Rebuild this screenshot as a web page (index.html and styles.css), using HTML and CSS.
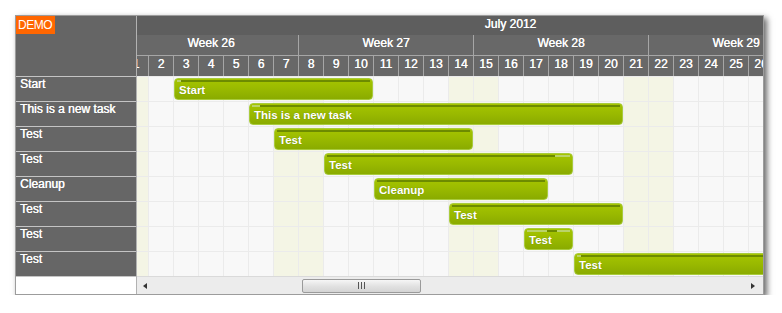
FILE: index.html
```html
<!DOCTYPE html>
<html>
<head>
<meta charset="utf-8">
<link rel="stylesheet" href="styles.css">
</head>
<body>
<div class="gantt">
  <div class="side">
    <div class="corner"><span class="demo">DEMO</span></div>
    <div class="label">Start</div>
    <div class="label">This is a new task</div>
    <div class="label">Test</div>
    <div class="label">Test</div>
    <div class="label">Cleanup</div>
    <div class="label">Test</div>
    <div class="label">Test</div>
    <div class="label">Test</div>
    <div class="side-foot"></div>
  </div>
  <div class="timeline">
    <div class="viewport">
      <div class="canvas">
        <div class="hrow month"><div class="mcell">July 2012</div></div>
        <div class="hrow weeks">
          <div class="wcell">Week 26</div>
          <div class="wcell">Week 27</div>
          <div class="wcell">Week 28</div>
          <div class="wcell">Week 29</div>
          <div class="wcell short"></div>
        </div>
        <div class="hrow days">
          <div class="dcell">1</div><div class="dcell">2</div><div class="dcell">3</div><div class="dcell">4</div><div class="dcell">5</div><div class="dcell">6</div><div class="dcell">7</div><div class="dcell">8</div><div class="dcell">9</div><div class="dcell">10</div><div class="dcell">11</div><div class="dcell">12</div><div class="dcell">13</div><div class="dcell">14</div><div class="dcell">15</div><div class="dcell">16</div><div class="dcell">17</div><div class="dcell">18</div><div class="dcell">19</div><div class="dcell">20</div><div class="dcell">21</div><div class="dcell">22</div><div class="dcell">23</div><div class="dcell">24</div><div class="dcell">25</div><div class="dcell">26</div><div class="dcell"></div><div class="dcell"></div><div class="dcell"></div><div class="dcell"></div><div class="dcell"></div>
        </div>
        <div class="rows">
          <div class="row"><div class="bar c3-11"><div class="strip"><i style="margin-left:4px;width:189px"></i></div><div class="txt">Start</div></div></div>
          <div class="row"><div class="bar c6-21"><div class="strip"><i style="margin-left:8px;width:360px"></i></div><div class="txt">This is a new task</div></div></div>
          <div class="row"><div class="bar c7-15"><div class="strip"><i style="margin-left:0;width:193px"></i></div><div class="txt">Test</div></div></div>
          <div class="row"><div class="bar c9-19"><div class="strip"><i style="margin-left:0;width:228px"></i></div><div class="txt">Test</div></div></div>
          <div class="row"><div class="bar c11-18"><div class="strip"><i style="margin-left:0;width:168px"></i></div><div class="txt">Cleanup</div></div></div>
          <div class="row"><div class="bar c14-21"><div class="strip"><i style="margin-left:0;width:168px"></i></div><div class="txt">Test</div></div></div>
          <div class="row"><div class="bar c17-19"><div class="strip"><i style="margin-left:20px;width:10px"></i></div><div class="txt">Test</div></div></div>
          <div class="row"><div class="bar c19-32"><div class="strip"><i style="margin-left:4px;width:318px"></i></div><div class="txt">Test</div></div></div>
        </div>
      </div>
    </div>
    <div class="scroll">
      <div class="arrow left"></div>
      <div class="track">
        <div class="thumb">
          <svg width="9" height="7" viewBox="0 0 9 7"><rect x="1" y="0" width="1" height="7" fill="#555"/><rect x="4" y="0" width="1" height="7" fill="#555"/><rect x="7" y="0" width="1" height="7" fill="#555"/></svg>
        </div>
      </div>
      <div class="arrow right"></div>
    </div>
  </div>
</div>
</body>
</html>
```

FILE: styles.css
```css
* { box-sizing: border-box; }

body {
  margin: 0;
  background: #ffffff;
  font-family: "Liberation Sans", Arial, sans-serif;
  font-size: 12px;
  color: #ffffff;
}

.gantt {
  margin: 15px 0 0 15px;
  width: 749px;
  border: 1px solid #9c9c9c;
  display: flex;
  box-shadow: 3px 3px 6px rgba(0, 0, 0, 0.6);
  background: #fff;
}

/* left column */
.side {
  width: 121px;
  flex: 0 0 121px;
  border-right: 1px solid #b2b2b2;
  display: flex;
  flex-direction: column;
}

.corner {
  height: 60px;
  background: #656565;
  display: flex;
  align-items: flex-start;
}

.demo {
  background: #ff6600;
  color: #fff;
  line-height: 18px;
  padding: 0 3px 0 2px;
  letter-spacing: -0.5px;
}

.label {
  height: 25px;
  border-top: 1px solid #c4c4c4;
  background: #666666;
  line-height: 15px;
  padding-left: 4px;
  white-space: nowrap;
  text-shadow: 0.3px 0 0 #fff;
}

.side-foot {
  height: 18px;
  border-top: 1px solid #c4c4c4;
  background: #ffffff;
}

/* timeline */
.timeline {
  width: 626px;
  display: flex;
  flex-direction: column;
}

.viewport {
  width: 626px;
  overflow: hidden;
}

.canvas {
  width: 775px;
  margin-left: -14px;
}

.hrow {
  display: flex;
  text-align: center;
  white-space: nowrap;
  text-shadow: 0.3px 0 0 #fff;
}

.month {
  height: 19px;
  background: #5e5e5e;
}

.mcell {
  width: 775px;
  line-height: 16px;
}

.weeks {
  height: 21px;
  background: #686868;
  border-bottom: 1px solid #a6a6a6;
}

.wcell {
  flex: 0 0 175px;
  border-left: 1px solid #a6a6a6;
  line-height: 17px;
}

.wcell.short { flex-basis: 75px; }

.days {
  height: 20px;
  background: #686868;
}

.dcell {
  flex: 0 0 25px;
  border-left: 1px solid #a6a6a6;
  line-height: 17px;
}

.rows {
  background-color: #f8f8f8;
  background-image:
    repeating-linear-gradient(90deg, #ebebeb 0 1px, transparent 1px 25px),
    linear-gradient(90deg,
      #f4f5e5 0 25px, transparent 25px 150px,
      #f4f5e5 150px 200px, transparent 200px 325px,
      #f4f5e5 325px 375px, transparent 375px 500px,
      #f4f5e5 500px 550px, transparent 550px 675px,
      #f4f5e5 675px 725px, transparent 725px);
}

.row {
  height: 25px;
  border-top: 1px solid #ebebeb;
  display: grid;
  grid-template-columns: repeat(31, 25px);
  align-items: start;
}

.bar {
  margin: 1px 0 0 1px;
  height: 22px;
  border: 1px solid #a9cb3c;
  border-radius: 4px;
  background: linear-gradient(#a6c500, #99b900 50%, #8aab00);
  overflow: hidden;
  white-space: nowrap;
}

.strip {
  display: flex;
  height: 2px;
  margin: 1px 2px 0 2px;
  background: #bad36a;
}

.strip i {
  display: block;
  height: 2px;
  background: #6d8b00;
}

.txt {
  line-height: 17px;
  padding-left: 4px;
  color: #fff;
  font-size: 11.5px;
  font-weight: bold;
  text-shadow: 0 0 1px rgba(60, 80, 0, 0.5);
}

.c3-11 { grid-column: 3 / 11; }
.c6-21 { grid-column: 6 / 21; }
.c7-15 { grid-column: 7 / 15; }
.c9-19 { grid-column: 9 / 19; }
.c11-18 { grid-column: 11 / 18; }
.c14-21 { grid-column: 14 / 21; }
.c17-19 { grid-column: 17 / 19; }
.c19-32 { grid-column: 19 / 32; }

/* scrollbar */
.scroll {
  height: 18px;
  border-top: 1px solid #dadada;
  background: #ececec;
  display: flex;
  align-items: center;
}

.arrow {
  flex: 0 0 16px;
  height: 17px;
  display: flex;
  align-items: center;
  justify-content: center;
}

.arrow.left::before {
  content: "";
  border-top: 3px solid transparent;
  border-bottom: 3px solid transparent;
  border-right: 4px solid #333;
}

.arrow.right::before {
  content: "";
  border-top: 3px solid transparent;
  border-bottom: 3px solid transparent;
  border-left: 4px solid #333;
  margin-left: -4px;
}

.track {
  flex: 1;
  height: 17px;
  display: flex;
  align-items: center;
}

.thumb {
  margin-left: 149px;
  width: 119px;
  height: 14px;
  border: 1px solid #9a9a9a;
  border-radius: 2px;
  background: linear-gradient(#f6f6f6, #e2e2e2 50%, #d4d4d4);
  display: flex;
  align-items: center;
  justify-content: center;
}
```
